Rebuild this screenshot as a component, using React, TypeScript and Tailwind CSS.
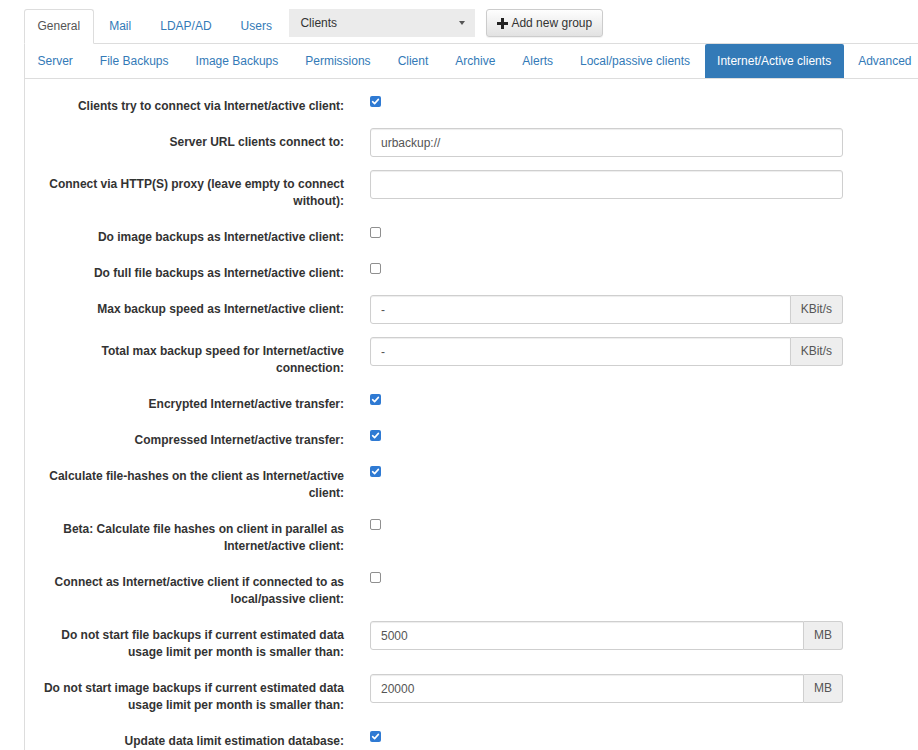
import React from 'react';

type Field =
  | { kind: 'check'; label: string; checked: boolean }
  | { kind: 'text'; label: string; value: string; unit?: string };

const mainTabs = ['General', 'Mail', 'LDAP/AD', 'Users'];

const subTabs = [
  'Server',
  'File Backups',
  'Image Backups',
  'Permissions',
  'Client',
  'Archive',
  'Alerts',
  'Local/passive clients',
  'Internet/Active clients',
  'Advanced',
];

const fields: Field[] = [
  { kind: 'check', label: 'Clients try to connect via Internet/active client:', checked: true },
  { kind: 'text', label: 'Server URL clients connect to:', value: 'urbackup://' },
  { kind: 'text', label: 'Connect via HTTP(S) proxy (leave empty to connect without):', value: '' },
  { kind: 'check', label: 'Do image backups as Internet/active client:', checked: false },
  { kind: 'check', label: 'Do full file backups as Internet/active client:', checked: false },
  { kind: 'text', label: 'Max backup speed as Internet/active client:', value: '-', unit: 'KBit/s' },
  { kind: 'text', label: 'Total max backup speed for Internet/active connection:', value: '-', unit: 'KBit/s' },
  { kind: 'check', label: 'Encrypted Internet/active transfer:', checked: true },
  { kind: 'check', label: 'Compressed Internet/active transfer:', checked: true },
  { kind: 'check', label: 'Calculate file-hashes on the client as Internet/active client:', checked: true },
  { kind: 'check', label: 'Beta: Calculate file hashes on client in parallel as Internet/active client:', checked: false },
  { kind: 'check', label: 'Connect as Internet/active client if connected to as local/passive client:', checked: false },
  {
    kind: 'text',
    label: 'Do not start file backups if current estimated data usage limit per month is smaller than:',
    value: '5000',
    unit: 'MB',
  },
  {
    kind: 'text',
    label: 'Do not start image backups if current estimated data usage limit per month is smaller than:',
    value: '20000',
    unit: 'MB',
  },
  { kind: 'check', label: 'Update data limit estimation database:', checked: true },
];

const CheckBox = ({ checked }: { checked: boolean }) =>
  checked ? (
    <span className="flex h-[11px] w-[11px] items-center justify-center rounded-[2px] bg-[#2f7ad3]">
      <svg width="9" height="9" viewBox="0 0 9 9">
        <path d="M1.6 4.7 L3.6 6.6 L7.4 2.4" fill="none" stroke="#fff" strokeWidth="1.6" strokeLinecap="round" strokeLinejoin="round" />
      </svg>
    </span>
  ) : (
    <span className="block h-[11px] w-[11px] rounded-[2px] border border-[#8f8f8f] bg-white" />
  );

const TextField = ({ value, unit }: { value: string; unit?: string }) => (
  <div className="flex h-[29px] w-full">
    <input
      readOnly
      defaultValue={value}
      className={
        'h-full min-w-0 flex-1 border border-[#cfcfcf] bg-white px-[10px] text-[12px] text-[#555] shadow-[inset_0_1px_1px_rgba(0,0,0,0.075)] outline-none ' +
        (unit ? 'rounded-l-[3px]' : 'rounded-[3px]')
      }
    />
    {unit && (
      <span className="flex h-full items-center rounded-r-[3px] border border-l-0 border-[#cfcfcf] bg-[#eee] px-[10px] text-[#555]">
        {unit}
      </span>
    )}
  </div>
);

const FormRow = ({ field }: { field: Field }) => (
  <div className="mb-[13px] flex">
    <div className="w-[332px] shrink-0 pl-[13px] pr-[13px] pt-[6px] text-right font-bold leading-[17px] text-[#333]">
      {field.label}
    </div>
    <div className="w-[499px] shrink-0 px-[13px]">
      {field.kind === 'check' ? (
        <div className="h-[23px] pt-[4px]">
          <CheckBox checked={field.checked} />
        </div>
      ) : (
        <TextField value={field.value} unit={field.unit} />
      )}
    </div>
  </div>
);

export default function App() {
  return (
    <div className="h-[750px] w-[918px] overflow-hidden bg-white font-['Liberation_Sans',Arial,sans-serif] text-[12px] leading-[17px] text-[#333]">
      <div className="w-[1100px] pl-[24px] pt-[9px]">
        {/* settings sections + group picker */}
        <div className="flex items-start border-b border-[#ddd]">
          {mainTabs.map((tab, i) => (
            <div
              key={tab}
              className={
                i === 0
                  ? '-mb-px mr-[2px] rounded-t-[3px] border border-[#ddd] border-b-white bg-white px-[12.5px] py-[8px] text-[#555]'
                  : '-mb-px mr-[2px] border border-transparent px-[12.5px] py-[8px] text-[#337ab7]'
              }
            >
              {tab}
            </div>
          ))}
          <div className="ml-[2px] flex h-[28px] w-[186px] items-center justify-between bg-[#ebebeb] pl-[11px] pr-[10px] text-[#333]">
            <span>Clients</span>
            <span className="h-0 w-0 border-x-[3.5px] border-t-[4px] border-x-transparent border-t-[#555]" />
          </div>
          <div className="ml-[11px] flex h-[28px] items-center gap-[3px] rounded-[3px] border border-[#ccc] bg-gradient-to-b from-[#fefefe] to-[#e2e2e2] pl-[10px] pr-[10px] text-[#333] shadow-[0_1px_1px_rgba(0,0,0,0.06)]">
            <svg width="11" height="11" viewBox="0 0 11 11">
              <rect x="4" y="0" width="3" height="11" fill="#222" />
              <rect x="0" y="4" width="11" height="3" fill="#222" />
            </svg>
            <span>Add new group</span>
          </div>
        </div>

        <div className="border-l border-[#ddd]">
          <div className="flex whitespace-nowrap border-b border-[#ddd]">
            {subTabs.map((tab) => (
              <div
                key={tab}
                className={
                  tab === 'Internet/Active clients'
                    ? 'mr-[2px] flex h-[34px] items-center rounded-t-[2px] bg-[#337ab7] px-[12.5px] text-white'
                    : 'mr-[2px] flex h-[34px] items-center px-[12.5px] text-[#337ab7]'
                }
              >
                {tab}
              </div>
            ))}
          </div>

          <form className="pt-[13px]">
            {fields.map((f) => (
              <FormRow key={f.label} field={f} />
            ))}
          </form>
        </div>
      </div>
    </div>
  );
}
